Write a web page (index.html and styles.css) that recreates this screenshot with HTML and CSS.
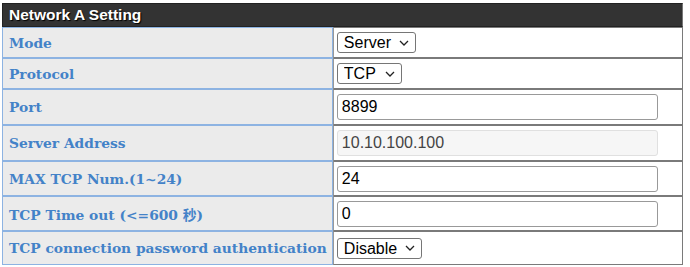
FILE: index.html
```html
<!DOCTYPE html>
<html lang="en">
<head>
  <meta charset="UTF-8" />
  <title>Network A Setting</title>
  <link rel="stylesheet" href="styles.css">
</head>
<body>
  <table class="setting">
    <tr>
      <th colspan="2" class="title">Network A Setting</th>
    </tr>
    <tr class="short">
      <td class="label">Mode</td>
      <td class="value">
        <select><option>Server</option><option>Client</option></select>
      </td>
    </tr>
    <tr class="short">
      <td class="label">Protocol</td>
      <td class="value">
        <select><option>TCP</option><option>UDP</option></select>
      </td>
    </tr>
    <tr class="tall">
      <td class="label">Port</td>
      <td class="value"><input type="text" value="8899"></td>
    </tr>
    <tr class="tall">
      <td class="label">Server Address</td>
      <td class="value"><input type="text" value="10.10.100.100" disabled></td>
    </tr>
    <tr class="mid">
      <td class="label">MAX TCP Num.(1~24)</td>
      <td class="value"><input type="text" value="24"></td>
    </tr>
    <tr class="mid">
      <td class="label">TCP Time out (&lt;=600 秒)</td>
      <td class="value"><input type="text" value="0"></td>
    </tr>
    <tr class="last">
      <td class="label">TCP connection password authentication</td>
      <td class="value">
        <select><option>Disable</option><option>Enable</option></select>
      </td>
    </tr>
  </table>
</body>
</html>
```

FILE: styles.css
```css
body {
  margin: 3px 0 0 2px;
  background: #fff;
}
.setting {
  border-collapse: separate;
  border-spacing: 0;
  width: 681px;
}
.title {
  background: #333;
  color: #fff;
  text-align: left;
  font-family: "Liberation Sans", Arial, sans-serif;
  font-size: 15.5px;
  font-weight: bold;
  text-shadow: 1px 1px 1px #000;
  height: 24px;
  padding: 0 6px;
  border: 1px solid #222;
  border-right-color: #777;
  box-sizing: border-box;
}
.label {
  width: 330px;
  box-sizing: border-box;
  background: #ebebeb;
  border: 1px solid #8db3e2;
  color: #4382c8;
  font-family: "DejaVu Serif", Georgia, "Noto Sans CJK SC", serif;
  font-weight: bold;
  font-size: 13.8px;
  padding: 0 5px 0 6px;
  white-space: nowrap;
}
.value {
  border: 1px solid #7a7a7a;
  border-left: 1px solid #999;
  padding: 0 3px;
  background: #fff;
}
.setting td { box-sizing: border-box; }
.short td { height: 31px; }
.tall td { height: 36px; }
.mid td { height: 35px; }
.last td { height: 34px; }

select {
  appearance: none;
  -webkit-appearance: none;
  font-family: "Liberation Sans", Arial, sans-serif;
  font-size: 16px;
  color: #000;
  height: 21px;
  line-height: 19px;
  padding: 0 23px 0 6px;
  border: 1px solid #767676;
  border-radius: 3px;
  background: #fff url("data:image/svg+xml,%3Csvg xmlns='http://www.w3.org/2000/svg' width='10' height='6' viewBox='0 0 10 6'%3E%3Cpath d='M1 1l4 4 4-4' fill='none' stroke='%23222' stroke-width='1.3'/%3E%3C/svg%3E") no-repeat right 6px center;
  vertical-align: middle;
}
input {
  font-family: "Liberation Sans", Arial, sans-serif;
  font-size: 16px;
  width: 321px;
  height: 26px;
  box-sizing: border-box;
  padding: 1px 4px;
  border: 1px solid #999;
  border-radius: 3px;
  color: #000;
  vertical-align: middle;
}
input:disabled {
  background: #f6f6f6;
  border-color: #e0e0e0;
  color: #444;
}
```
